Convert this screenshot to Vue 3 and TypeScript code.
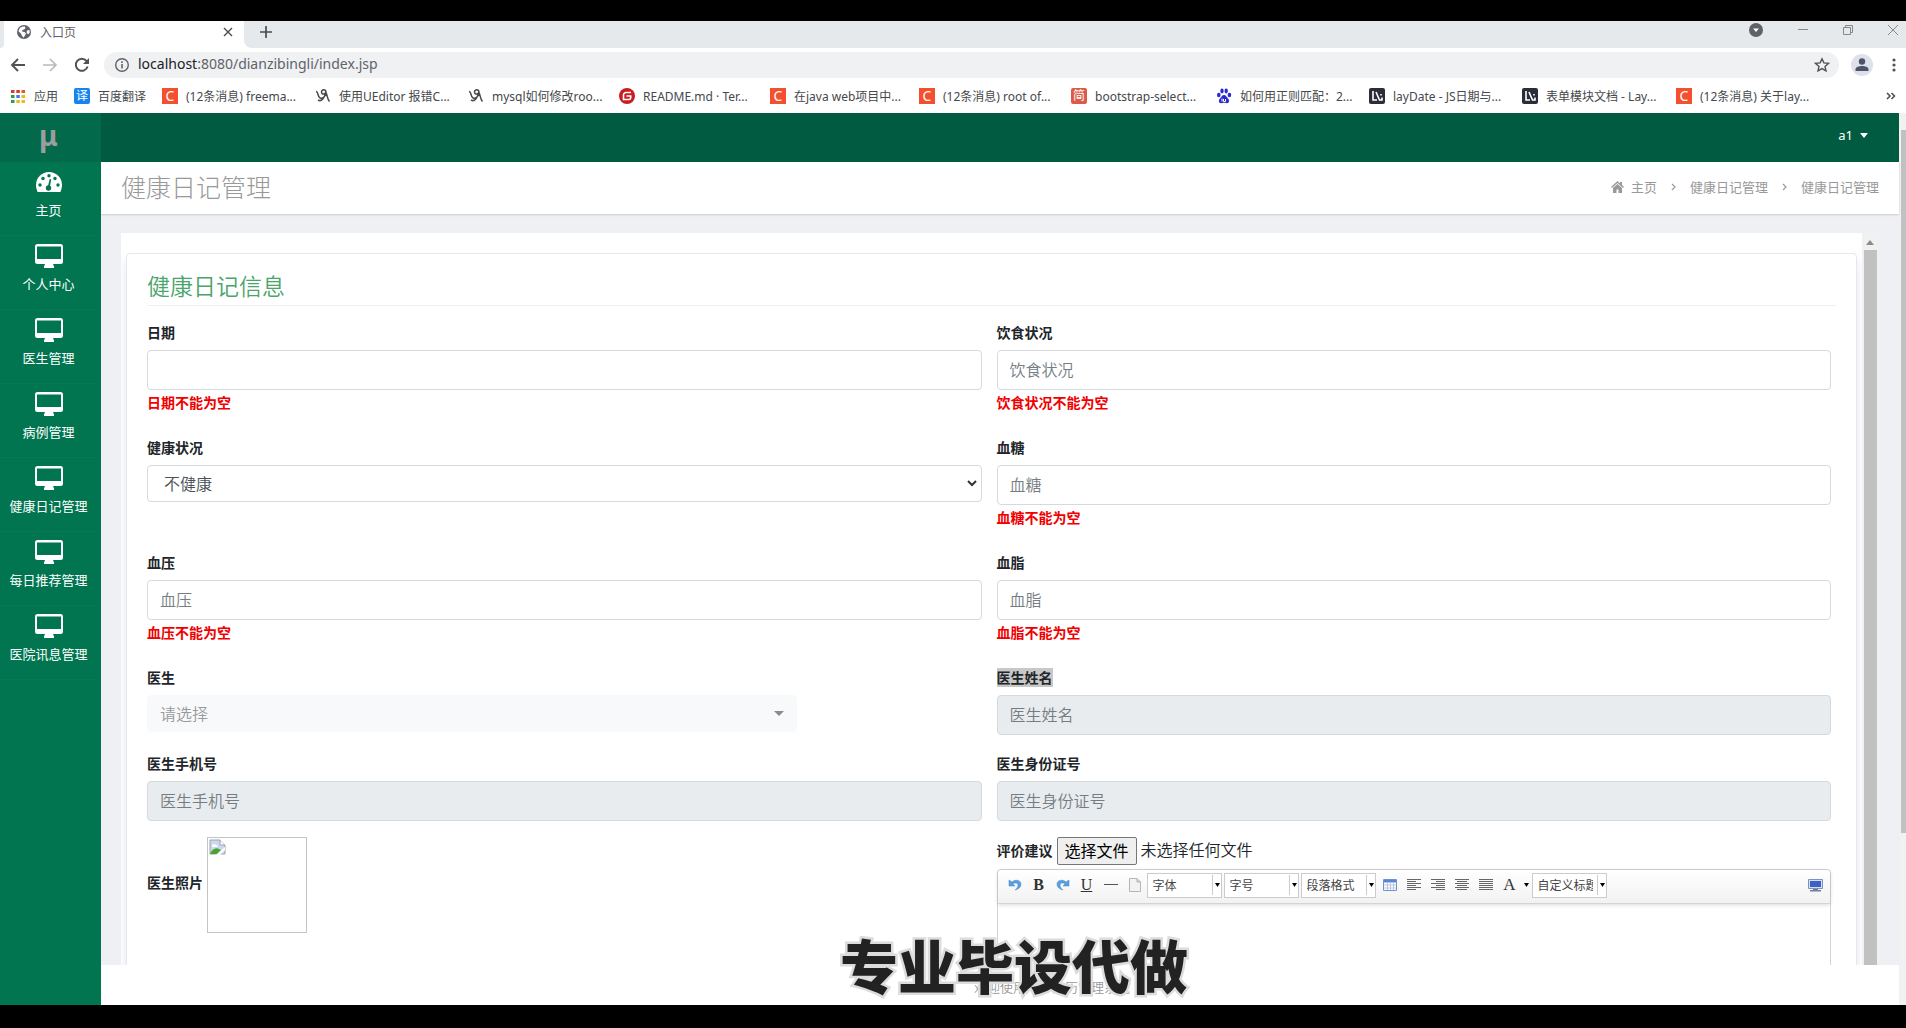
<script setup lang="ts">
import { ref } from 'vue'

interface Bookmark {
  kind: 'apps' | 'translate' | 'csdn' | 'swirl' | 'gitee' | 'jian' | 'paw' | 'lay'
  text: string
  width: number
}

interface Field {
  id: string
  label: string
  kind: 'input' | 'select' | 'picker'
  placeholder?: string
  error?: string
  readonly?: boolean
  selected?: boolean
}

const bookmarks: Bookmark[] = [
  { kind: 'apps', text: '应用', width: 64 },
  { kind: 'translate', text: '百度翻译', width: 88 },
  { kind: 'csdn', text: '(12条消息) freema...', width: 153 },
  { kind: 'swirl', text: '使用UEditor 报错C...', width: 153 },
  { kind: 'swirl', text: 'mysql如何修改roo...', width: 151 },
  { kind: 'gitee', text: 'README.md · Ter...', width: 151 },
  { kind: 'csdn', text: '在java web项目中...', width: 149 },
  { kind: 'csdn', text: '(12条消息) root of...', width: 152 },
  { kind: 'jian', text: 'bootstrap-select...', width: 145 },
  { kind: 'paw', text: '如何用正则匹配：2...', width: 153 },
  { kind: 'lay', text: 'layDate - JS日期与...', width: 153 },
  { kind: 'lay', text: '表单模块文档 - Lay...', width: 154 },
  { kind: 'csdn', text: '(12条消息) 关于lay...', width: 136 },
]

const menu = ['个人中心', '医生管理', '病例管理', '健康日记管理', '每日推荐管理', '医院讯息管理']

const fields: Field[] = [
  { id: 'riqi', label: '日期', kind: 'input', error: '日期不能为空' },
  { id: 'yinshi', label: '饮食状况', kind: 'input', placeholder: '饮食状况', error: '饮食状况不能为空' },
  { id: 'jiankang', label: '健康状况', kind: 'select' },
  { id: 'xuetang', label: '血糖', kind: 'input', placeholder: '血糖', error: '血糖不能为空' },
  { id: 'xueya', label: '血压', kind: 'input', placeholder: '血压', error: '血压不能为空' },
  { id: 'xuezhi', label: '血脂', kind: 'input', placeholder: '血脂', error: '血脂不能为空' },
  { id: 'yisheng', label: '医生', kind: 'picker' },
  { id: 'xingming', label: '医生姓名', kind: 'input', placeholder: '医生姓名', readonly: true, selected: true },
  { id: 'shouji', label: '医生手机号', kind: 'input', placeholder: '医生手机号', readonly: true },
  { id: 'shenfen', label: '医生身份证号', kind: 'input', placeholder: '医生身份证号', readonly: true },
]

const aligns = [
  { name: '左对齐', d: 'M1 1.5h14M1 3.5h9M1 5.5h14M1 7.5h9M1 9.5h14M1 11.5h9' },
  { name: '右对齐', d: 'M1 1.5h14M6 3.5h9M1 5.5h14M6 7.5h9M1 9.5h14M6 11.5h9' },
  { name: '居中', d: 'M1 1.5h14M3 3.5h10M1 5.5h14M3 7.5h10M1 9.5h14M3 11.5h10' },
  { name: '两端对齐', d: 'M1 1.5h14M1 3.5h14M1 5.5h14M1 7.5h14M1 9.5h14M1 11.5h14' },
]

const fileInput = ref<HTMLInputElement | null>(null)
const health = ref('不健康')
</script>

<template>
  <div class="stage">
    <div class="tabs">
      <div class="prev-tab"></div>
      <div class="tab">
        <svg width="16" height="16" viewBox="0 0 16 16"><circle cx="8" cy="8" r="7" fill="#5f6368" /><path d="M2.500 7.500C3 4 5 2.500 8.500 2.300L9.500 4 8 5.500 6.500 6l-.5 1.500 2.500.5 1.500 1.500-1 2-1.500 2.300L5.500 11 4.500 9zM11 6.500l2.500-.5.3 2.500-1.800 2-1.500-2z" fill="#fff" /></svg>
        <span class="tab-title">入口页</span>
        <button class="plain" aria-label="关闭标签页"><svg width="10" height="10" viewBox="0 0 10 10"><path d="M1 1l8 8M9 1L1 9" stroke="#4a4d51" stroke-width="1.400" /></svg></button>
      </div>
      <div class="strip">
        <button class="plain new-tab" aria-label="新标签页"><svg width="14" height="14" viewBox="0 0 14 14"><path d="M7 1v12M1 7h12" stroke="#4a4d51" stroke-width="1.700" /></svg></button>
        <div class="win">
          <button class="plain" aria-label="搜索标签页"><svg width="16" height="16" viewBox="0 0 16 16"><circle cx="8" cy="8" r="7" fill="#5f6368" /><path d="M5 6.500h6L8 10z" fill="#fff" /></svg></button>
          <button class="plain" aria-label="最小化"><svg width="12" height="12" viewBox="0 0 12 12"><path d="M1 5.500h10" stroke="#888" /></svg></button>
          <button class="plain" aria-label="还原"><svg width="12" height="12" viewBox="0 0 12 12"><path d="M1.500 3.500h7v7h-7zM3.500 3V1.500h7v7H9" fill="none" stroke="#888" /></svg></button>
          <button class="plain" aria-label="关闭"><svg width="12" height="12" viewBox="0 0 12 12"><path d="M1 1l10 10M11 1L1 11" stroke="#888" /></svg></button>
        </div>
      </div>
    </div>

    <div class="nav">
      <button class="plain" aria-label="后退"><svg width="16" height="16" viewBox="0 0 16 16"><path d="M15 8H2M8 2L2 8l6 6" fill="none" stroke="#4f5357" stroke-width="1.900" /></svg></button>
      <button class="plain" aria-label="前进"><svg width="16" height="16" viewBox="0 0 16 16"><path d="M1 8h13M8 2l6 6-6 6" fill="none" stroke="#b9bbbe" stroke-width="1.700" /></svg></button>
      <button class="plain" aria-label="重新加载"><svg width="16" height="16" viewBox="0 0 16 16"><path d="M13.600 9.500A6 6 0 1 1 12.500 4" fill="none" stroke="#4f5357" stroke-width="2" /><path d="M15 1v6H9z" fill="#4f5357" /></svg></button>
      <div class="omni">
        <svg width="16" height="16" viewBox="0 0 16 16"><circle cx="8" cy="8" r="6.300" fill="none" stroke="#5f6368" stroke-width="1.400" /><path d="M8 7v4.500M8 4.300v1.600" stroke="#5f6368" stroke-width="1.600" /></svg>
        <span class="url"><b>localhost</b>:8080/dianzibingli/index.jsp</span>
        <button class="plain" aria-label="收藏"><svg width="16" height="16" viewBox="0 0 16 16"><path d="M8 1.800l1.900 4.100 4.500.5-3.400 3 1 4.500L8 11.600l-4 2.300 1-4.500-3.400-3 4.500-.5z" fill="none" stroke="#4f5357" stroke-width="1.400" /></svg></button>
      </div>
      <button class="plain" aria-label="用户"><svg width="22" height="22" viewBox="0 0 22 22"><circle cx="11" cy="11" r="11" fill="#dfe1ea" /><circle cx="11" cy="7.500" r="3.200" fill="#4b5468" /><path d="M4.500 17v-1.500C4.500 12.800 8 12 11 12s6.500.8 6.500 3.500V17z" fill="#4b5468" /></svg></button>
      <button class="plain" aria-label="菜单"><svg width="6" height="16" viewBox="0 0 6 16"><g fill="#4f5357"><circle cx="3" cy="3" r="1.600" /><circle cx="3" cy="8" r="1.600" /><circle cx="3" cy="13" r="1.600" /></g></svg></button>
    </div>

    <div class="marks">
      <a v-for="(b, i) in bookmarks" :key="i" href="#" class="mark" :style="{ width: b.width + 'px' }">
        <svg v-if="b.kind === 'apps'" width="16" height="16" viewBox="0 0 16 16"><path d="M1 2h3.500v3H1zM6.300 2h3.500v3H6.300z" fill="#d93a2b" /><path d="M11.500 2H15v3h-3.500z" fill="#e05a2b" /><path d="M1 7h3.500v3H1z" fill="#2a9d4a" /><path d="M6.300 7h3.500v3H6.300z" fill="#3f7de0" /><path d="M11.500 7H15v3h-3.500z" fill="#efb820" /><path d="M1 12h3.500v3H1z" fill="#2a9d4a" /><path d="M6.300 12h3.500v3H6.300zM11.500 12H15v3h-3.500z" fill="#efb820" /></svg>
        <i v-else-if="b.kind === 'translate'" class="tile blue">译</i>
        <i v-else-if="b.kind === 'csdn'" class="tile orange">C</i>
        <svg v-else-if="b.kind === 'swirl'" width="16" height="16" viewBox="0 0 16 16"><path d="M1 3.500c2.500 0 1.500 5.500 4 6.500s6-1.500 6-5.500C11 1 6.500 1 6.500 4S10.500 6.500 11 4M3 12c4 2.500 6-2.500 8-7.500 1.500 3 1 6 3.500 9" fill="none" stroke="#4a4a4a" stroke-width="1.500" /></svg>
        <svg v-else-if="b.kind === 'gitee'" width="16" height="16" viewBox="0 0 16 16"><circle cx="8" cy="8" r="8" fill="#c71d23" /><path d="M12 4.500H7A2.500 2.500 0 0 0 4.500 7v4.500H10A1.700 1.700 0 0 0 11.700 10V8H7.500" fill="none" stroke="#fff" stroke-width="1.600" /></svg>
        <i v-else-if="b.kind === 'jian'" class="tile red">简</i>
        <svg v-else-if="b.kind === 'paw'" width="16" height="16" viewBox="0 0 16 16"><g fill="#2a2ad0"><ellipse cx="2.800" cy="7" rx="1.800" ry="2.300" /><ellipse cx="6" cy="3" rx="1.700" ry="2.400" /><ellipse cx="10.200" cy="3" rx="1.700" ry="2.400" /><ellipse cx="13.400" cy="7" rx="1.800" ry="2.300" /><path d="M8 7c2 0 2.500 2 4 3.500s1.500 4.700-1 4.700c-1.500 0-2-.4-3-.4s-1.500.4-3 .4c-2.500 0-2.600-3.200-1-4.700S6 7 8 7z" /></g><path d="M6 10.500v3M7.500 11v2.500h2V11" fill="none" stroke="#fff" /></svg>
        <svg v-else width="16" height="16" viewBox="0 0 16 16"><rect width="16" height="16" rx="2" fill="#2b2d3a" /><path d="M4 3v9h4M7 4l3.500 8H13V9.500M12 6v1.500" fill="none" stroke="#fff" stroke-width="1.600" /></svg>
        <span>{{ b.text }}</span>
      </a>
      <button class="plain more" aria-label="更多书签"><svg width="10" height="8" viewBox="0 0 10 8"><path d="M1 1l3 3-3 3M5.500 1l3 3-3 3" fill="none" stroke="#4a4d51" stroke-width="1.500" /></svg></button>
    </div>

    <div class="app">
      <nav class="side">
        <div class="logo">μ</div>
        <a href="#" class="item">
          <svg width="28" height="24" viewBox="0 0 28 24"><path d="M14 2A13 13 0 0 0 1 15c0 2.500.6 4.700 1.600 7h22.800c1-2.300 1.600-4.500 1.600-7A13 13 0 0 0 14 2z" fill="#fff" /><g fill="#007550"><circle cx="5" cy="15" r="1.700" /><circle cx="8" cy="8.500" r="1.700" /><circle cx="14" cy="5.800" r="1.700" /><circle cx="20" cy="8.500" r="1.700" /><circle cx="23" cy="15" r="1.700" /><circle cx="13.500" cy="18" r="2.700" /><path d="M14.700 9l1.500.3-1.400 8-2-.5z" /></g></svg>
          <span>主页</span>
        </a>
        <a v-for="m in menu" :key="m" href="#" class="item">
          <svg width="28" height="24" viewBox="0 0 28 24"><path fill-rule="evenodd" d="M2.500 0h23A2.500 2.500 0 0 1 28 2.500v15a2.500 2.500 0 0 1-2.500 2.500H18l1 2.500V24H9v-1.500l1-2.500H2.500A2.500 2.500 0 0 1 0 17.500v-15A2.500 2.500 0 0 1 2.500 0zM2 2.500v12.500h24V2.500z" fill="#fff" /></svg>
          <span>{{ m }}</span>
        </a>
      </nav>

      <div class="main">
        <header class="top"><button class="user">a1 <svg width="8" height="5" viewBox="0 0 8 5"><path d="M0 0h8L4 5z" fill="#fff" /></svg></button></header>
        <div class="heading">
          <h1>健康日记管理</h1>
          <nav class="crumbs">
            <svg width="13" height="12" viewBox="0 0 13 12"><path d="M6.500 0L0 6l1 1 5.500-5L12 7l1-1-2-2V1H9v1.500zM6.500 3L2 7v5h3.500V8.500h2V12H11V7z" fill="#999" /></svg>
            <a href="#">主页</a>
            <svg class="sep" width="5" height="8" viewBox="0 0 5 8"><path d="M1 1l3 3-3 3" fill="none" stroke="#999" stroke-width="1.200" /></svg>
            <a href="#">健康日记管理</a>
            <svg class="sep" width="5" height="8" viewBox="0 0 5 8"><path d="M1 1l3 3-3 3" fill="none" stroke="#999" stroke-width="1.200" /></svg>
            <a href="#">健康日记管理</a>
          </nav>
        </div>

        <div class="body">
          <div class="frame">
            <section class="card">
              <h2>健康日记信息</h2>
              <form class="grid" @submit.prevent>
                <div v-for="f in fields" :key="f.id" class="field">
                  <label :for="f.id"><mark v-if="f.selected">{{ f.label }}</mark><template v-else>{{ f.label }}</template></label>
                  <div v-if="f.kind === 'select'" class="pick">
                    <select :id="f.id" v-model="health" class="health"><option>不健康</option><option>健康</option></select>
                    <svg width="10" height="7" viewBox="0 0 10 7"><path d="M1 1l4 4 4-4" fill="none" stroke="#333" stroke-width="2" /></svg>
                  </div>
                  <div v-else-if="f.kind === 'picker'" class="pick doctor">
                    <select :id="f.id"><option>请选择</option></select>
                    <svg width="10" height="5" viewBox="0 0 10 5"><path d="M0 0h10L5 5z" fill="#8b8b8b" /></svg>
                  </div>
                  <input v-else :id="f.id" type="text" :placeholder="f.placeholder" :readonly="f.readonly" />
                  <p v-if="f.error" class="error">{{ f.error }}</p>
                </div>
                <div class="photo">
                  <span class="cap">医生照片</span>
                  <div class="image" role="img" aria-label="医生照片">
                    <svg width="17" height="16" viewBox="0 0 17 16"><path d="M1 1h10l5 5v9H1z" fill="#c9d8f3" stroke="#a3a3a3" /><path d="M11 1v5h5" fill="#fff" stroke="#a3a3a3" /><path d="M3 7c0-2 3-3 4-1 2 0 2 2 1 2H3z" fill="#fff" /><path d="M1 15c2-5 6-7 9-5l2 1-4 4z" fill="#4ca32f" /><path d="M7 16l9-8v3l-5 5z" fill="#fff" /></svg>
                  </div>
                </div>
                <div>
                  <div class="upload">
                    <label for="pingjia">评价建议</label>
                    <button type="button" @click="fileInput?.click()">选择文件</button>
                    <span>未选择任何文件</span>
                    <input id="pingjia" ref="fileInput" type="file" hidden />
                  </div>
                  <div class="editor">
                    <div class="tools">
                      <button type="button" aria-label="撤销"><svg width="14" height="14" viewBox="0 0 14 14"><path d="M1 2v6h6L5 6c2-2 5-1 5 1 0 3-2 4-3 5 4-1 6-3 6-6 0-4-6-5-9-2z" fill="#5b9fdc" stroke="#3f86c8" stroke-width=".5" /></svg></button>
                      <button type="button" class="serif" aria-label="加粗"><b>B</b></button>
                      <button type="button" aria-label="重做"><svg width="14" height="14" viewBox="0 0 14 14"><path d="M13 2v6H7l2-2C7 4 4 5 4 7c0 3 2 4 3 5-4-1-6-3-6-6 0-4 6-5 9-2z" fill="#5b9fdc" stroke="#3f86c8" stroke-width=".5" /></svg></button>
                      <button type="button" class="serif" aria-label="下划线"><u>U</u></button>
                      <button type="button" aria-label="分隔线"><svg width="14" height="14" viewBox="0 0 14 14"><path d="M0 6.500h14" stroke="#555" /></svg></button>
                      <button type="button" aria-label="清空文档"><svg width="14" height="14" viewBox="0 0 14 14"><path d="M1.500.5H9l3.500 3.500v9.500h-11z" fill="#f3f3f3" stroke="#b5b5b5" /><path d="M9 .5V4h3.500" fill="#ccc" stroke="#b5b5b5" /></svg></button>
                      <div class="combo"><select aria-label="字体"><option>字体</option></select><i></i><svg width="5" height="4" viewBox="0 0 5 4"><path d="M0 0h5L2.500 4z" /></svg></div>
                      <div class="combo"><select aria-label="字号"><option>字号</option></select><i></i><svg width="5" height="4" viewBox="0 0 5 4"><path d="M0 0h5L2.500 4z" /></svg></div>
                      <div class="combo"><select aria-label="段落格式"><option>段落格式</option></select><i></i><svg width="5" height="4" viewBox="0 0 5 4"><path d="M0 0h5L2.500 4z" /></svg></div>
                      <button type="button" aria-label="表格"><svg width="14" height="12" viewBox="0 0 14 12"><path d="M.5.5h13v11H.5z" fill="#fff" stroke="#6f93cf" /><path d="M1 1h12v2.500H1z" fill="#5b86d6" /><path d="M1 6h12M1 9h12M4.500 3v8M7.500 3v8M10.500 3v8" stroke="#b9c7e2" /></svg></button>
                      <button v-for="a in aligns" :key="a.name" type="button" :aria-label="a.name"><svg width="16" height="14" viewBox="0 0 16 14"><path :d="a.d" stroke="#666" /></svg></button>
                      <button type="button" class="serif" aria-label="字体颜色"><b class="letter">A</b></button>
                      <button type="button" class="caret" aria-label="选择颜色"><svg width="5" height="4" viewBox="0 0 5 4"><path d="M0 0h5L2.500 4z" /></svg></button>
                      <div class="combo"><select aria-label="自定义标题"><option>自定义标题</option></select><i></i><svg width="5" height="4" viewBox="0 0 5 4"><path d="M0 0h5L2.500 4z" /></svg></div>
                      <button type="button" class="full" aria-label="全屏"><svg width="15" height="13" viewBox="0 0 15 13"><path d="M.5.5h14v9H.5z" fill="#d5e0f3" stroke="#7d93bd" /><path d="M2 2h11v6H2z" fill="#3b62c4" /><path d="M5 10h5v1h3v1.500H2V11h3z" fill="#6d7fa5" /></svg></button>
                    </div>
                    <div class="paper" contenteditable="true" aria-label="评价建议"></div>
                  </div>
                </div>
              </form>
            </section>
          </div>
          <div class="inner-bar"><svg width="8" height="5" viewBox="0 0 8 5"><path d="M0 5h8L4 0z" fill="#8b8b8b" /></svg><div></div></div>
        </div>
        <footer>欢迎使用电子病历管理系统</footer>
      </div>

      <div class="outer-bar"><div></div></div>
    </div>
    <div class="caption">专业毕设代做</div>
  </div>
</template>

<style>
body { margin: 0; background: #000; }
</style>

<style scoped>
* { box-sizing: border-box; }
.stage {
  position: relative; height: 100vh; padding: 21px 0 23px; display: flex; flex-direction: column; overflow: hidden;
  background: #000; font-family: "Noto Sans", "Noto Sans CJK SC", sans-serif; font-size: 13px; color: #212529;
}
a { text-decoration: none; color: inherit; }
button, input, select { font-family: inherit; }
svg { flex: none; display: block; }
.plain { display: flex; align-items: center; justify-content: center; padding: 0; border: 0; background: none; }

.tabs { display: flex; height: 27px; background: #fff; flex: none; }
.prev-tab { width: 4px; background: #e6e9eb; border-radius: 0 0 4px 0; }
.tab { display: flex; align-items: center; width: 240px; padding: 0 11px 6px 12px; }
.tab-title { flex: 1; margin-left: 8px; font-size: 12px; color: #5f6368; }
.strip { display: flex; flex: 1; background: #e6e9eb; border-radius: 0 0 0 8px; }
.new-tab { width: 44px; padding-bottom: 6px; }
.win { display: flex; gap: 33px; margin-left: auto; padding: 0 7px 9px 0; }

.nav { display: flex; align-items: center; gap: 16px; height: 34px; padding: 0 9px 0 10px; background: #fff; flex: none; }
.omni { display: flex; align-items: center; flex: 1; height: 26px; padding: 0 9px 0 10px; margin-left: -2px; border-radius: 13px; background: #f0f1f3; }
.url { flex: 1; margin-left: 8px; font-size: 14px; line-height: 20px; padding-bottom: 2px; color: #5f6368; }
.url b { font-weight: 400; color: #202124; }
.nav > button:nth-last-child(2) { margin: 0 2px 0 -4px; }

.marks { display: flex; align-items: center; height: 31px; padding: 0 10px 3px 10px; background: #fff; flex: none; }
.mark { display: flex; align-items: center; gap: 8px; flex: none; font-size: 12px; color: #45484c; white-space: nowrap; }
.tile { width: 16px; height: 16px; line-height: 16px; border-radius: 2px; color: #fff; font-style: normal; text-align: center; font-size: 12px; flex: none; }
.blue { background: #1684ef; }
.orange { background: #f4502f; border-radius: 0; font-size: 14px; }
.red { background: #dc5a47; }
.more { margin-left: auto; }

.app { display: flex; flex: 1; min-height: 0; }
.side { width: 101px; padding-right: 4px; background: #007550; flex: none; text-align: center; color: #fff; }
.logo { height: 49px; margin-right: -4px; padding-right: 4px; background: #026a4a; color: #9c9e9d; font-size: 28px; font-weight: 700; line-height: 44px; }
.item { display: flex; flex-direction: column; align-items: center; gap: 7px; height: 74px; padding-top: 8px; border-bottom: 1px solid #067855; line-height: 18px; white-space: nowrap; }
.main { display: flex; flex-direction: column; flex: 1; min-width: 0; background: #fff; }
.top { display: flex; justify-content: flex-end; height: 49px; padding: 0 31px 5px 0; background: #005b41; flex: none; }
.user { display: flex; align-items: center; gap: 7px; padding: 0; border: 0; background: none; color: #fff; font-size: 13px; }
.heading { display: flex; align-items: center; justify-content: space-between; height: 52px; padding: 0 20px 3px; background: #fff; box-shadow: 0 1px 2px rgba(0, 0, 0, .15); flex: none; z-index: 1; }
h1 { margin: 0; font-size: 25px; line-height: 34px; font-weight: 300; color: #999; }
.crumbs { display: flex; align-items: center; color: #999; }
.crumbs > svg:first-child { margin-right: 7px; }
.sep { margin: 0 14px; }

.body { display: flex; flex: 1; min-height: 0; padding: 19px 21px 0 20px; background: #eff0f4; }
.frame { flex: 1; min-width: 0; padding: 20px 5px 0; overflow: hidden; background: #fff; }
.card { padding: 15px 20px 0; border: 1px solid #e6e8ec; border-radius: 4px 4px 0 0; background: #fff; box-shadow: 0 8px 8px 2px rgba(190, 200, 220, .3); }
h2 { margin: 0 0 17px; padding-bottom: 2px; border-bottom: 1px solid #f0f0f0; font-size: 23px; line-height: 34px; font-weight: 350; color: #4aa56c; }
.grid { display: grid; grid-template-columns: 1fr 1fr; column-gap: 15px; padding-right: 5px; }
.field { display: flex; flex-direction: column; min-height: 86px; }
.field:nth-child(n + 9) { min-height: 83px; }
label, .cap { font-size: 14px; font-weight: 700; line-height: 20px; white-space: nowrap; }
.field label { margin-bottom: 7px; }
mark { background: #c8c8c8; color: inherit; }
.field input { width: 100%; height: 40px; padding: 0 12px; border: 1px solid #d5dade; border-radius: 4px; background: #fff; font-size: 16px; }
.field input::placeholder { color: #757d84; opacity: 1; font-weight: 350; }
.field input[readonly] { background: #e9ecef; }
.error { margin: 3px 0 26px; font-size: 14px; font-weight: 700; line-height: 19px; color: #f00000; }
.pick { display: grid; align-items: center; }
.pick > *, .combo > * { grid-area: 1 / 1; }
.pick svg { justify-self: end; margin-right: 5px; pointer-events: none; }
.pick select { appearance: none; width: 100%; height: 37px; padding: 0 16px; border: 1px solid #d5dade; border-radius: 4px; background: #fff; font-size: 16px; font-weight: 350; color: #495057; }
.doctor { width: 650px; max-width: 100%; }
.doctor select { padding: 0 12px; border-color: #f8f9fa; background: #f8f9fa; color: #999; }
.doctor svg { margin-right: 13px; }
.photo { display: flex; align-items: center; gap: 4px; align-self: start; }
.cap { padding-bottom: 4px; }
.image { width: 100px; height: 96px; padding: 1px; border: 1px solid #c4c4c4; }
.upload { display: flex; align-items: center; gap: 4px; height: 28px; font-size: 16px; margin-bottom: 4px; line-height: 24px; font-weight: 350; }
.upload span { padding-bottom: 2px; }
.upload button { height: 28px; padding: 0 7px; border: 1px solid #767676; border-radius: 2px; background: #efefef; font-size: 16px; line-height: 24px; color: #000; }
.editor { border: 1px solid #d4d4d4; border-radius: 4px; }
.tools { display: flex; align-items: center; height: 34px; padding: 0 3px 3px 5px; border-bottom: 1px solid #d4d4d4; background: linear-gradient(#fff, #f2f2f2); border-radius: 4px 4px 0 0; box-shadow: 0 1px 4px rgba(0, 0, 0, .15); }
.tools button { display: flex; align-items: center; justify-content: center; width: 24px; height: 24px; padding: 0; border: 0; background: none; flex: none; color: #333; }
.tools .serif { font-family: "Liberation Serif", serif; font-size: 16px; }
.tools .letter { font-weight: 400; font-size: 17px; }
.tools .caret { width: 10px; }
.tools .full { margin-left: auto; }
.combo { display: grid; align-items: center; width: 75px; height: 25px; margin-right: 2px; border: 1px solid #ccc; background: #fff; flex: none; }
.combo select { appearance: none; width: 60px; height: 20px; padding: 0 0 0 5px; border: 0; background: none; font-size: 12px; color: #444; overflow: hidden; }
.combo i { justify-self: end; width: 1px; height: 20px; margin-right: 8px; background: #ccc; }
.combo svg { justify-self: end; margin-right: 1px; pointer-events: none; }
.paper { min-height: 240px; }
.inner-bar { display: flex; flex-direction: column; align-items: center; width: 16px; padding-top: 7px; background: #f1f1f1; flex: none; }
.inner-bar div { flex: 1; width: 13px; margin-top: 5px; background: #c1c1c1; }
footer { height: 40px; padding-left: 104px; padding-top: 2px; line-height: 40px; color: #999; text-align: center; background: #fff; flex: none; font-weight: 350; }
.outer-bar { display: flex; width: 7px; padding: 17px 0 172px 2px; background: #f1f1f1; flex: none; }
.outer-bar div { flex: 1; background: #c1c1c1; }
.caption {
  position: absolute; left: 0; right: 0; bottom: 22px; padding-left: 122px; text-align: center; font-family: "Noto Sans CJK SC", sans-serif; font-size: 58px; line-height: 84px; font-weight: 900;
  color: #222; -webkit-text-stroke: 5px #dcdcdc; paint-order: stroke fill; pointer-events: none;
}
</style>
